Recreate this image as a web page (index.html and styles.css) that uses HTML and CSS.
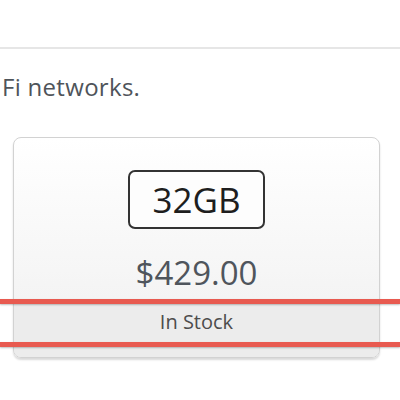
FILE: index.html
```html
<!DOCTYPE html>
<html lang="en">
<head>
  <meta charset="UTF-8">
  <title>iPad - Buy</title>
  <link rel="stylesheet" href="styles.css">
</head>
<body>
  <div class="page">
    <div class="intro">
      <p class="note">Fi networks.</p>
    </div>

    <div class="model">
      <div class="capacity">32GB</div>
      <div class="price">$429.00</div>
      <div class="stock">In Stock</div>
    </div>

    <!-- highlight lines around the availability row -->
    <div class="mark mark-top"></div>
    <div class="mark mark-bottom"></div>
  </div>
</body>
</html>
```

FILE: styles.css
```css
body {
  margin: 0;
  padding: 0;
  background: #fff;
  font-family: "Open Sans", "Liberation Sans", sans-serif;
  color: #555;
}
.page {
  position: relative;
  width: 400px;
  height: 400px;
  overflow: hidden;
}
.intro {
  margin-top: 47px;
  border-top: 2px solid #e6e6e6;
  height: 86px;
}
.note {
  margin: 0;
  padding: 23px 0 0 2px;
  font-size: 24px;
  line-height: 30px;
  letter-spacing: 0.3px;
  color: #4f545a;
}
.model {
  margin: 2px 0 0 13px;
  width: 365px;
  height: 219px;
  border: 1px solid #d2d2d2;
  border-radius: 8px;
  background: linear-gradient(#fff, #f0f0f0);
  box-shadow: 0 2px 2px rgba(0, 0, 0, 0.15);
  display: flex;
  flex-direction: column;
  align-items: center;
  overflow: hidden;
}
.capacity {
  margin-top: 32px;
  width: 133px;
  height: 55px;
  border: 2px solid #333;
  border-radius: 7px;
  background: #fdfdfd;
  font-size: 35px;
  line-height: 55px;
  text-align: center;
  color: #1e1e1e;
}
.price {
  margin-top: 24px;
  font-size: 33px;
  line-height: 40px;
  color: #4f555c;
}
.stock {
  margin-top: 7px;
  align-self: stretch;
  flex: 1;
  background: #ececec;
  font-size: 20px;
  line-height: 44px;
  text-align: center;
  color: #4d4d4d;
}
.mark {
  position: absolute;
  left: 0;
  right: 0;
  height: 5px;
  background: #e85a50;
  box-shadow: 0 1px 2px rgba(0, 0, 0, 0.25);
}
.mark-top {
  top: 299px;
}
.mark-bottom {
  top: 342px;
}
```
